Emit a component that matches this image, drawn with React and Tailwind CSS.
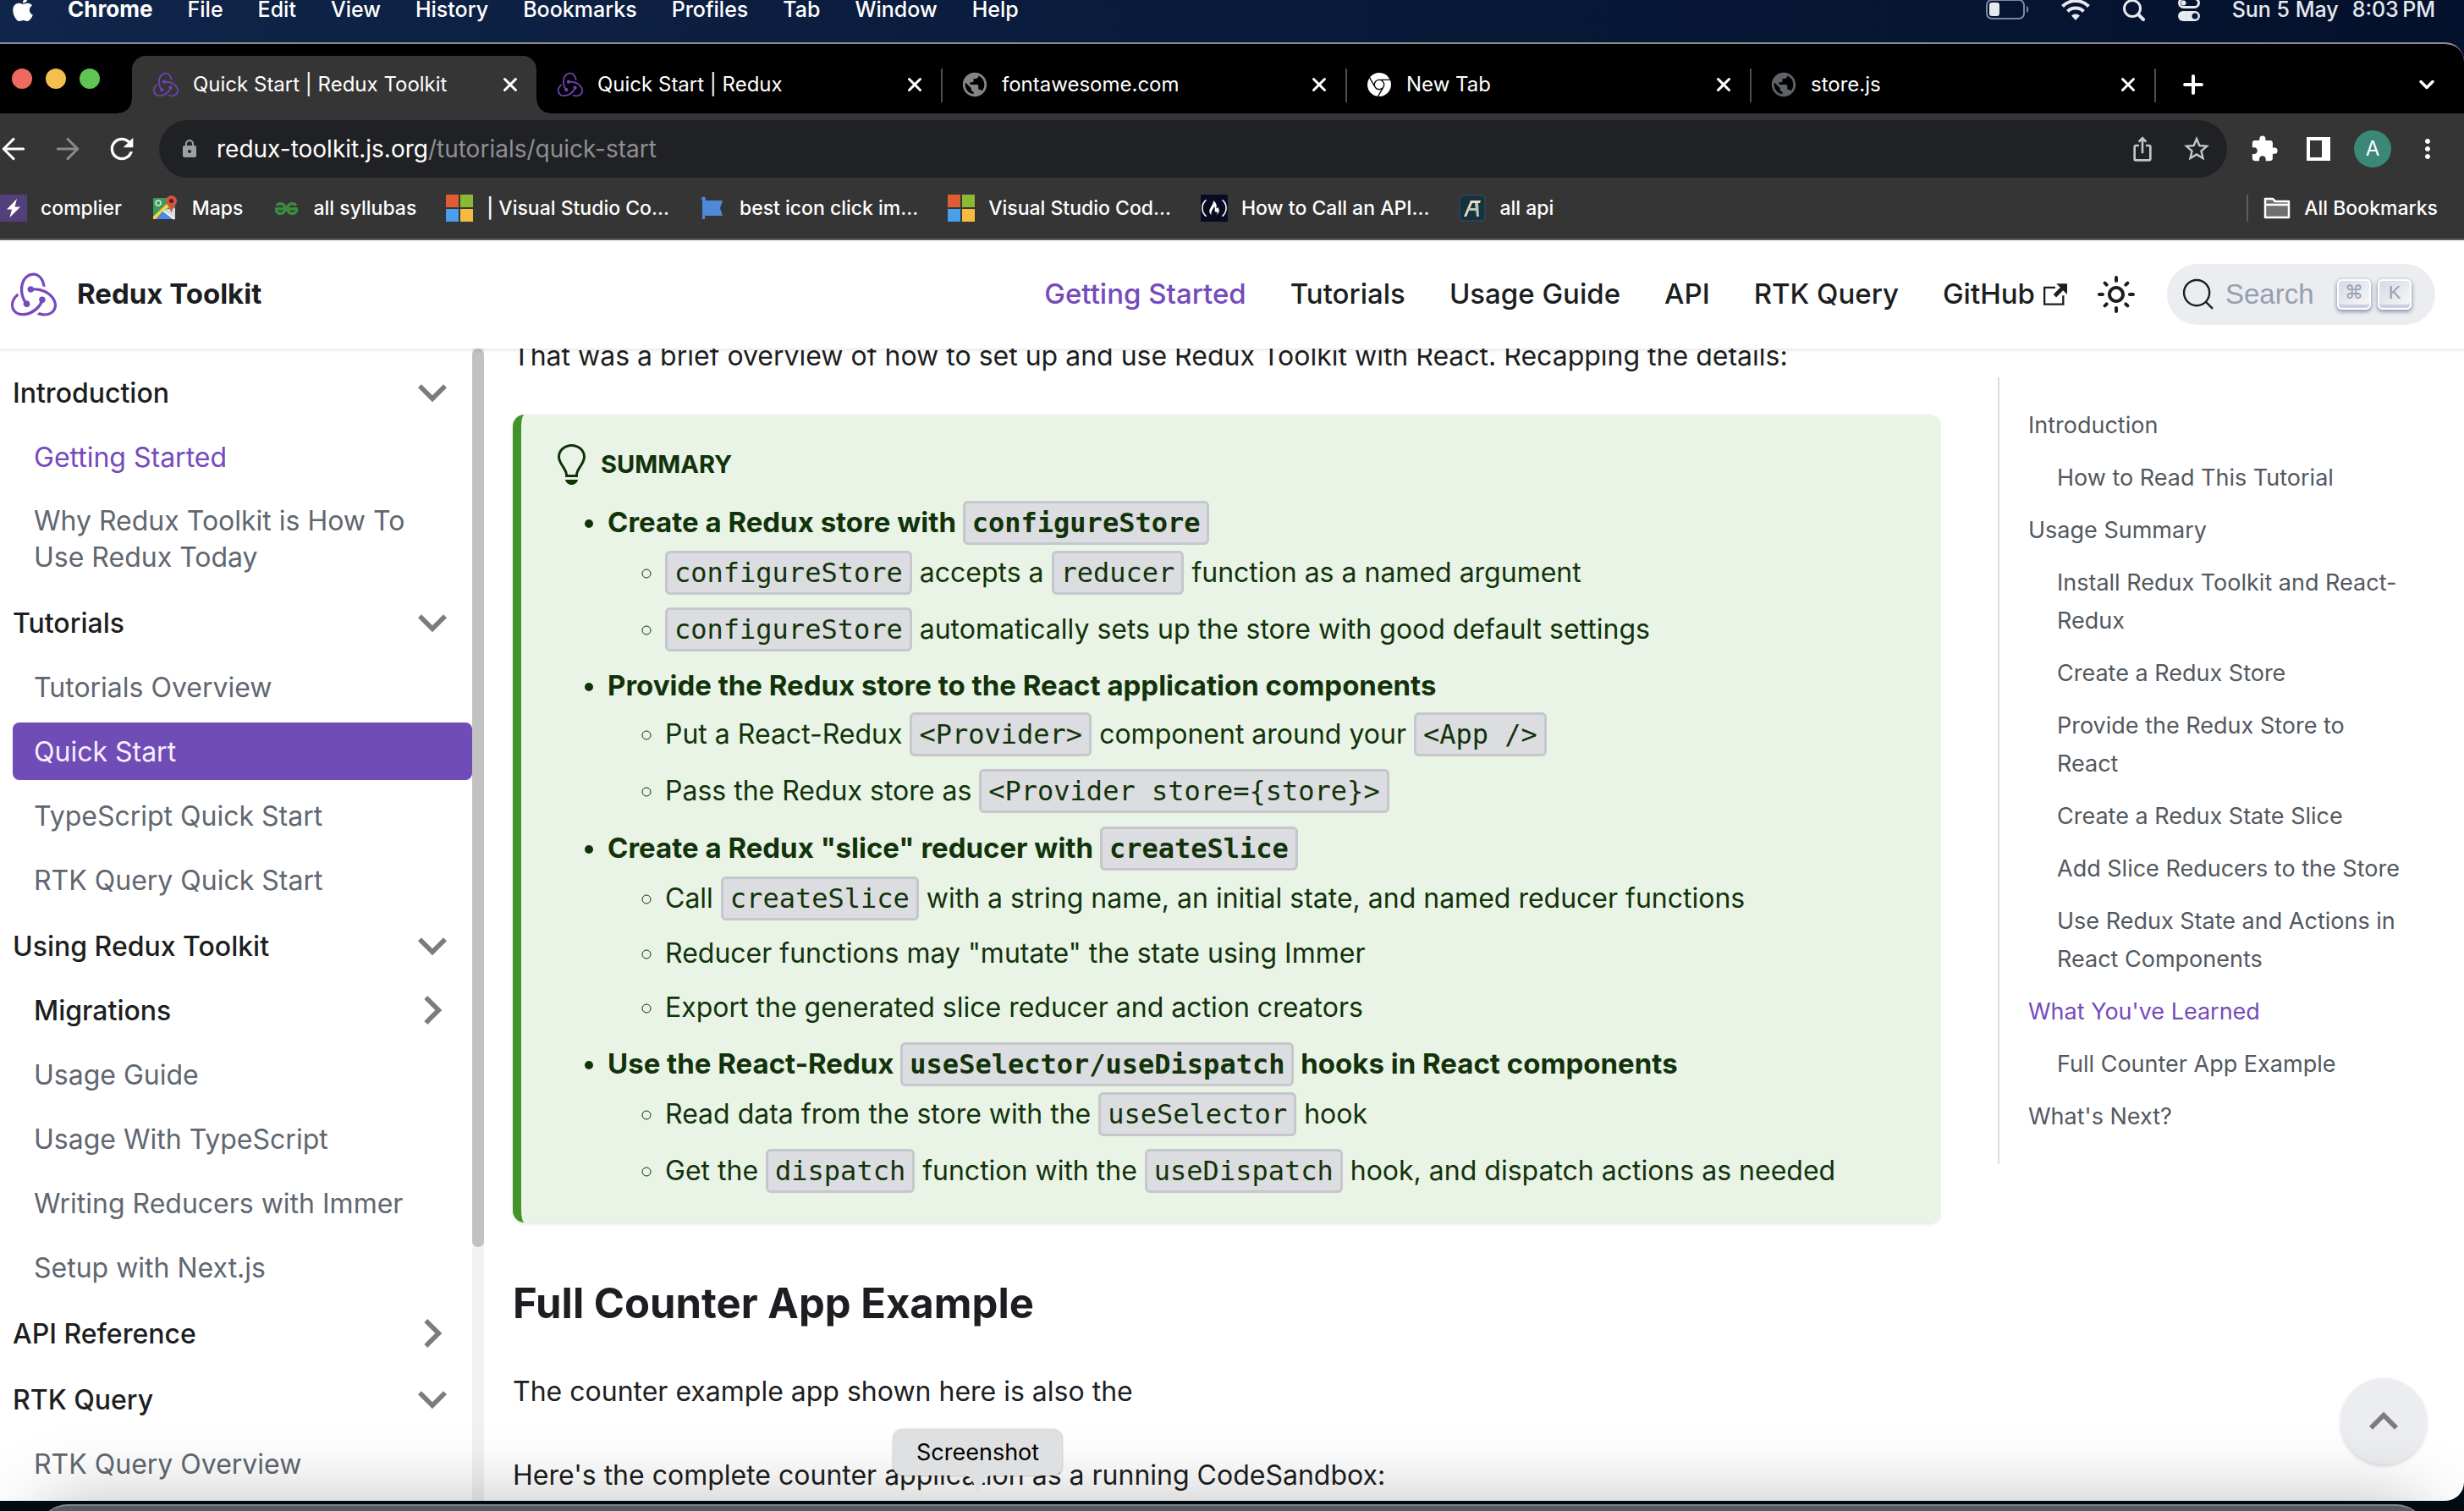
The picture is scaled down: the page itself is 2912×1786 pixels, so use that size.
import React from 'react';
import { SiRedux, SiGooglechrome, SiGeeksforgeeks } from 'react-icons/si';
import { FaApple, FaFreeCodeCamp } from 'react-icons/fa';
import { MdPublic, MdExtension, MdLock, MdStarBorder, MdRefresh, MdMoreVert, MdIosShare } from 'react-icons/md';
import { ArrowLeft, ArrowRight, ChevronDown, Plus, X } from 'lucide-react';

/* ---------- macOS menu bar ---------- */

const menus = ['File', 'Edit', 'View', 'History', 'Bookmarks', 'Profiles', 'Tab', 'Window', 'Help'];

function MenuBar() {
  return (
    <header className="h-[50px] shrink-0 text-[25px] leading-[22px] font-medium text-white">
      <div className="flex h-[22px] items-center justify-between pr-[34px] pl-[11px]">
        <nav aria-label="Menu bar" className="flex items-center gap-[41px]">
          <button aria-label="Apple menu" className="-mr-[4px]">
            <FaApple className="size-[32px]" />
          </button>
          <button className="text-[26px] font-bold">Chrome</button>
          {menus.map((m) => (
            <button key={m}>{m}</button>
          ))}
        </nav>
        <div className="flex items-center text-[#e6e9ef]">
          <svg viewBox="0 0 52 26" className="mr-[37px] h-[26px] w-[52px]" aria-label="Battery">
            <rect x="1" y="2" width="44" height="22" rx="6" fill="none" stroke="#8088a0" strokeWidth="2" />
            <rect x="4" y="5" width="12" height="16" rx="3" fill="currentColor" />
            <path d="M48 9c3 1 3 7 0 8z" fill="#8088a0" />
          </svg>
          <svg viewBox="0 0 34 26" className="mr-[38px] h-[26px] w-[34px]" fill="none" stroke="currentColor" strokeWidth="4" aria-label="Wi-Fi">
            <path d="M1.500 9.500a22 22 0 0 1 31 0" />
            <path d="M7.500 15.500a13.500 13.500 0 0 1 19 0" />
            <path d="M12 20.500a7.500 7.500 0 0 1 10 0L17 26z" fill="currentColor" stroke="none" />
          </svg>
          <svg viewBox="0 0 28 28" className="mr-[38px] size-[28px]" fill="none" stroke="currentColor" strokeWidth="3" strokeLinecap="round" aria-label="Spotlight">
            <circle cx="12" cy="13" r="9.500" />
            <path d="M19 20l6 6" strokeWidth="4" />
          </svg>
          <svg viewBox="0 0 26 30" className="mr-[38px] h-[30px] w-[26px]" aria-label="Control Centre">
            <rect x="1.500" y="2.500" width="23" height="10" rx="5" fill="none" stroke="currentColor" strokeWidth="3" />
            <circle cx="6.500" cy="7.500" r="3" fill="currentColor" />
            <rect x="0" y="17" width="26" height="12" rx="6" fill="currentColor" />
            <circle cx="20" cy="23" r="3.500" fill="#061634" />
          </svg>
          <time className="flex gap-[16px]">
            <span>Sun 5 May</span>
            <span>8:03{'\u2009'}PM</span>
          </time>
        </div>
      </div>
    </header>
  );
}

/* ---------- Browser chrome ---------- */

const redux = <SiRedux className="size-[30px] text-[#6b45ae]" />;

const tabs = [
  { title: 'Quick Start | Redux Toolkit', icon: redux, active: true },
  { title: 'Quick Start | Redux', icon: redux },
  { title: 'fontawesome.com', icon: <MdPublic className="size-[34px] text-[#868686]" /> },
  { title: 'New Tab', icon: <SiGooglechrome className="size-[28px] text-white" /> },
  { title: 'store.js', icon: <MdPublic className="size-[34px] text-[#5f6368]" /> },
];

function Tab({ title, icon, active, divider }) {
  return (
    <div
      role="tab"
      aria-selected={!!active}
      className={
        'relative flex h-[68px] w-[478px] min-w-0 items-center pr-[18px] pl-[23px] ' +
        (active
          ? 'rounded-t-[16px] bg-[#353535] before:absolute before:bottom-0 before:-left-4 before:size-4 before:bg-[radial-gradient(circle_at_0_0,transparent_15px,#353535_16px)] after:absolute after:-right-4 after:bottom-0 after:size-4 after:bg-[radial-gradient(circle_at_100%_0,transparent_15px,#353535_16px)]'
          : '')
      }
    >
      <span className="flex w-[34px] shrink-0 justify-center">{icon}</span>
      <span className="ml-[15px] grow truncate text-[24px]">{title}</span>
      <button aria-label="Close tab" className="shrink-0">
        <X className="size-[26px]" strokeWidth={2.8} />
      </button>
      {divider && <span className="absolute top-[15px] -right-[2px] h-[40px] w-[2px] bg-[#4d4d4d]" />}
    </div>
  );
}

function TabStrip() {
  return (
    <div className="flex h-[82px] items-end bg-black">
      <div className="mb-[29px] flex w-[156px] shrink-0 gap-[16px] pl-[14px]">
        <button aria-label="Close window" className="size-[24px] rounded-full bg-[#ed6a5e]" />
        <button aria-label="Minimise window" className="size-[24px] rounded-full bg-[#f5bf4f]" />
        <button aria-label="Zoom window" className="size-[24px] rounded-full bg-[#61c554]" />
      </div>
      <div role="tablist" className="flex">
        {tabs.map((t, i) => (
          <Tab key={t.title} {...t} divider={i > 0} />
        ))}
      </div>
      <div className="flex h-[68px] grow items-center justify-between pr-[30px] pl-[29px]">
        <button aria-label="New tab">
          <Plus className="size-[34px]" strokeWidth={2.8} />
        </button>
        <button aria-label="Search tabs">
          <ChevronDown className="size-[28px]" strokeWidth={3} />
        </button>
      </div>
    </div>
  );
}

function AddressRow() {
  return (
    <div className="flex h-[84px] items-center bg-[#353535]">
      <button aria-label="Back" className="-ml-[4px]">
        <ArrowLeft className="size-[40px]" strokeWidth={1.8} />
      </button>
      <button aria-label="Forward" className="ml-[24px] text-[#8a8a8a]">
        <ArrowRight className="size-[40px]" strokeWidth={1.8} />
      </button>
      <button aria-label="Reload" className="ml-[24px]">
        <MdRefresh className="size-[40px]" />
      </button>
      <div className="ml-[24px] flex h-[68px] grow items-center rounded-full bg-[#202124] pr-[18px] pl-[24px]">
        <MdLock className="size-[24px] text-[#9aa0a6]" />
        <div role="textbox" aria-label="Address" tabIndex={0} className="ml-[20px] grow text-[28px] text-[#8e9094]">
          <span className="text-white">redux-toolkit.js.org</span>/tutorials/quick-start
        </div>
        <button aria-label="Share" className="text-[#c4c5c6]">
          <MdIosShare className="size-[32px]" />
        </button>
        <button aria-label="Bookmark this page" className="ml-[30px] text-[#c4c5c6]">
          <MdStarBorder className="size-[36px]" />
        </button>
      </div>
      <button aria-label="Extensions" className="ml-[27px]">
        <MdExtension className="size-[34px]" />
      </button>
      <button aria-label="Side panel" className="ml-[33px] flex size-[28px] border-4 border-r-[10px] border-white" />
      <button aria-label="Profile" className="ml-[28px] size-[44px] rounded-full bg-[#3b8778] text-[24px] leading-[44px]">
        A
      </button>
      <button aria-label="More" className="mr-[25px] ml-[25px]">
        <MdMoreVert className="size-[36px]" />
      </button>
    </div>
  );
}

function Windows() {
  return (
    <span className="grid size-[32px] grid-cols-2 gap-[2px]">
      <span className="bg-[#e05c35]" />
      <span className="bg-[#8cb933]" />
      <span className="bg-[#4a9fea]" />
      <span className="bg-[#f5bb41]" />
    </span>
  );
}

const bookmarks = [
  {
    label: 'complier',
    icon: (
      <svg viewBox="0 0 32 32" className="size-[32px]">
        <rect width="32" height="32" fill="#53407b" />
        <path d="M20 5 8 17.500h6L11.500 27 24 14.500h-6.500z" fill="#fff" />
      </svg>
    ),
  },
  {
    label: 'Maps',
    icon: (
      <svg viewBox="0 0 32 32" className="size-[32px]">
        <rect x="2" y="4" width="26" height="25" fill="#3f9a5a" />
        <path d="M28 16v13L15 18z" fill="#d9dde2" />
        <path d="m15 19 11 10H5z" fill="#4f86ec" />
        <path d="M2 29v-3L20 9l3 5-9 5L5 29z" fill="#f8d347" />
        <path d="m14 19 13 10" stroke="#fff" strokeWidth="2" />
        <circle cx="8" cy="10" r="3" fill="none" stroke="#d5ecd9" strokeWidth="1.500" />
        <path d="M23.500 1a6.500 6.500 0 0 1 6.500 6.500c0 5-5 6-6 13.500h-1c-1-7.500-6-8.500-6-13.500A6.500 6.500 0 0 1 23.500 1z" fill="#d65241" />
        <circle cx="23.500" cy="7.500" r="2.500" fill="#5d1a15" />
      </svg>
    ),
  },
  { label: 'all syllubas', icon: <SiGeeksforgeeks className="size-[27px] stroke-current stroke-1 text-[#3d8b40]" /> },
  { label: '| Visual Studio Co...', icon: <Windows /> },
  {
    label: 'best icon click im...',
    icon: (
      <svg viewBox="0 0 32 32" className="size-[32px]" fill="#5089d8">
        <path d="M4 4h3v25H4z" />
        <circle cx="5.500" cy="5" r="2.500" />
        <path d="M7 7h21l-3 9 3 9H7z" />
      </svg>
    ),
  },
  { label: 'Visual Studio Cod...', icon: <Windows /> },
  {
    label: 'How to Call an API...',
    icon: (
      <span className="flex size-[32px] items-center justify-center bg-[#0a0a23]">
        <FaFreeCodeCamp className="size-[30px]" />
      </span>
    ),
  },
  {
    label: 'all api',
    icon: (
      <svg viewBox="0 0 32 32" className="size-[32px]">
        <rect x="1" y="1" width="30" height="30" rx="4" fill="#17323f" stroke="#2f5361" />
        <path d="M6 26 14 7h12l-1 3h-9L9 26z" fill="#e8dcc0" />
        <path d="M11 16h12l-1 3H11zM19 10h4l1 16h-3z" fill="#b9c4bd" />
      </svg>
    ),
  },
];

function BookmarkBar() {
  return (
    <div className="flex h-[64px] items-start justify-between bg-[#353535] pt-[12px] text-[23px] leading-[32px] font-medium">
      <nav aria-label="Bookmarks" className="flex gap-[35px]">
        {bookmarks.map((b) => (
          <a key={b.label} href="#bookmark" className="flex items-center gap-4 whitespace-nowrap">
            <span className="flex w-[32px] justify-center">{b.icon}</span>
            {b.label}
          </a>
        ))}
      </nav>
      <a href="#all" className="mr-[31px] flex items-center gap-4 border-l-2 border-[#5c5c5c] pl-[18px]">
        <svg viewBox="0 0 32 32" className="size-[32px]" fill="#6f6f6f" stroke="#fff" strokeWidth="2.500" strokeLinejoin="round">
          <path d="M2 27V5h9l3 3h16v19z" />
          <path d="M2 12h28" />
        </svg>
        All Bookmarks
      </a>
    </div>
  );
}

/* ---------- Documentation site ---------- */

function Chevron({ className }) {
  return (
    <svg viewBox="0 0 24 24" className={className} fill="#7c7c7c" aria-hidden="true">
      <path d="M7.410 15.410L12 10.830l4.590 4.580L18 14l-6-6-6 6z" />
    </svg>
  );
}

function Key({ children }) {
  return (
    <kbd className="flex h-[36px] w-[40px] items-start justify-center rounded-[6px] border-2 border-white bg-linear-to-br from-[#d5dbe4] to-[#f8f8f8] pt-[3px] font-['Liberation_Sans','DejaVu_Sans',sans-serif] text-[22px] leading-[22px] text-[#969faf] shadow-[inset_0_-4px_0_#cdcde6,0_2px_4px_1px_rgba(30,35,90,0.400)]">
      {children}
    </kbd>
  );
}

const navLinks = ['Getting Started', 'Tutorials', 'Usage Guide', 'API', 'RTK Query'];

function Navbar() {
  return (
    <header className="relative z-10 flex h-[128px] shrink-0 items-center bg-white pr-[34px] pl-[13px] text-[33px] font-medium text-[#1c1e21] shadow-[0_2px_4px_rgba(0,0,0,0.1)]">
      <a href="#home" className="flex grow items-center gap-[24px] font-bold">
        <SiRedux className="size-[54px] text-[#764abc]" />
        Redux Toolkit
      </a>
      <nav aria-label="Main" className="flex items-center gap-[52px]">
        {navLinks.map((l, i) => (
          <a key={l} href="#nav" className={i === 0 ? 'text-[#764abc]' : ''}>
            {l}
          </a>
        ))}
        <a href="#github" className="flex items-center gap-[10px]">
          GitHub
          <svg viewBox="0 0 24 24" className="size-[28px]" fill="currentColor">
            <path d="M21 13v10h-21v-19h12v2h-10v15h17v-8h2zm3-12h-10.988l4.035 4-6.977 7.070 2.828 2.828 6.977-7.070 4.125 4.172v-11z" />
          </svg>
        </a>
      </nav>
      <button aria-label="Switch between dark and light mode" className="ml-[34px]">
        <svg viewBox="0 0 24 24" className="size-[48px]" fill="currentColor">
          <path d="M12,9c1.650,0,3,1.350,3,3s-1.350,3-3,3s-3-1.350-3-3S10.350,9,12,9 M12,7c-2.760,0-5,2.240-5,5s2.240,5,5,5s5-2.240,5-5 S14.760,7,12,7L12,7z M2,13l2,0c0.550,0,1-0.450,1-1s-0.450-1-1-1l-2,0c-0.550,0-1,0.450-1,1S1.450,13,2,13z M20,13l2,0c0.550,0,1-0.450,1-1 s-0.450-1-1-1l-2,0c-0.550,0-1,0.450-1,1S19.450,13,20,13z M11,2v2c0,0.550,0.450,1,1,1s1-0.450,1-1V2c0-0.550-0.450-1-1-1S11,1.450,11,2z M11,20v2c0,0.550,0.450,1,1,1s1-0.450,1-1v-2c0-0.550-0.450-1-1-1C11.450,19,11,19.450,11,20z M5.990,4.580c-0.390-0.390-1.030-0.390-1.410,0 c-0.390,0.390-0.390,1.030,0,1.410l1.060,1.060c0.390,0.390,1.030,0.390,1.410,0s0.390-1.030,0-1.410L5.990,4.580z M18.360,16.950 c-0.390-0.390-1.030-0.390-1.410,0c-0.390,0.390-0.390,1.030,0,1.410l1.060,1.060c0.390,0.390,1.030,0.390,1.410,0c0.390-0.390,0.390-1.030,0-1.410 L18.360,16.950z M19.420,5.990c0.390-0.390,0.390-1.030,0-1.410c-0.390-0.390-1.030-0.390-1.410,0l-1.060,1.060c-0.390,0.390-0.390,1.030,0,1.410 s1.030,0.390,1.410,0L19.420,5.990z M7.050,18.360c0.390-0.390,0.390-1.030,0-1.410c-0.390-0.390-1.030-0.390-1.410,0l-1.060,1.060 c-0.390,0.390-0.390,1.030,0,1.410s1.030,0.390,1.410,0L7.050,18.360z" />
        </svg>
      </button>
      <button className="ml-[36px] flex h-[72px] w-[317px] items-center rounded-full bg-[#ebedf0] pl-[17px] font-['Liberation_Sans',sans-serif] font-normal text-[#969faf]">
        <svg viewBox="0 0 20 20" className="size-[40px] text-[#1c1e21]" fill="none" stroke="currentColor" strokeWidth="1.200" strokeLinecap="round">
          <path d="M14.386 14.386l4.088 4.088-4.088-4.088c-2.942 2.942-7.712 2.942-10.653 0-2.942-2.942-2.942-7.712 0-10.653 2.942-2.942 7.712-2.942 10.653 0 2.942 2.942 2.942 7.712 0 10.653z" />
        </svg>
        <span className="ml-[12px] grow text-left">Search</span>
        <span className="mr-[28px] flex gap-[8px]">
          <Key>⌘</Key>
          <Key>K</Key>
        </span>
      </button>
    </header>
  );
}

const sidebar = [
  {
    label: 'Introduction',
    open: true,
    items: [{ label: 'Getting Started', tone: 'accent' }, { label: 'Why Redux Toolkit is How To Use Redux Today' }],
  },
  {
    label: 'Tutorials',
    open: true,
    items: [
      { label: 'Tutorials Overview' },
      { label: 'Quick Start', tone: 'current' },
      { label: 'TypeScript Quick Start' },
      { label: 'RTK Query Quick Start' },
    ],
  },
  {
    label: 'Using Redux Toolkit',
    open: true,
    items: [
      { label: 'Migrations', tone: 'category' },
      { label: 'Usage Guide' },
      { label: 'Usage With TypeScript' },
      { label: 'Writing Reducers with Immer' },
      { label: 'Setup with Next.js' },
    ],
  },
  { label: 'API Reference', open: false, items: [] },
  { label: 'RTK Query', open: true, items: [{ label: 'RTK Query Overview' }] },
];

const tones = {
  accent: 'text-[#764abc]',
  current: 'rounded-[8px] bg-[#704cb6] text-[#f4effc]',
  category: 'font-medium text-[#1c1e21]',
  plain: 'text-[#606770]',
};

function Sidebar() {
  return (
    <aside className="flex w-[572px] shrink-0">
      <nav aria-label="Docs sidebar" className="w-[558px] overflow-hidden pt-[18px] pl-[15px] text-[32px] leading-[43px]">
        <ul>
          {sidebar.map((group) => (
            <li key={group.label} className="mt-[10px] first:mt-0">
              <button className="flex h-[68px] w-full items-center justify-between pr-[13px] font-medium text-[#1c1e21]">
                {group.label}
                <Chevron className={group.open ? 'size-[68px] rotate-180' : 'size-[68px] rotate-90'} />
              </button>
              <ul>
                {group.items.map((item) => (
                  <li key={item.label} className="mt-[8px]">
                    <a
                      href="#doc"
                      className={'flex min-h-[68px] items-center justify-between py-[12px] pl-[25px] ' + tones[item.tone || 'plain']}
                    >
                      <span className="max-w-[460px]">{item.label}</span>
                      {item.tone === 'category' && <Chevron className="-my-[12px] mr-[13px] size-[68px] rotate-90" />}
                    </a>
                  </li>
                ))}
              </ul>
            </li>
          ))}
        </ul>
      </nav>
      <div className="w-[14px] bg-[#f1f1f1]">
        <div className="h-[78%] rounded-full bg-[#c1c1c1]" />
      </div>
    </aside>
  );
}

function Code({ children }) {
  return (
    <code className="rounded-[6px] border-[3px] border-[#c6c7cd] bg-[#dcdde1] px-[8px] py-[4px] font-['DejaVu_Sans_Mono',monospace] text-[32px] leading-none">
      {children}
    </code>
  );
}

/* One line of the summary; lines that hold code are slightly taller. */
function Line({ bold, children }) {
  return (
    <p className={'leading-[56px] has-[code]:leading-[59px] ' + (bold ? 'text-[33px] font-bold' : 'text-[32px] font-normal')}>
      {children}
    </p>
  );
}

const summary = [
  {
    title: <>Create a Redux store with <Code>configureStore</Code></>,
    points: [
      <><Code>configureStore</Code> accepts a <Code>reducer</Code> function as a named argument</>,
      <><Code>configureStore</Code> automatically sets up the store with good default settings</>,
    ],
  },
  {
    title: 'Provide the Redux store to the React application components',
    points: [
      <>Put a React-Redux <Code>{'<Provider>'}</Code> component around your <Code>{'<App />'}</Code></>,
      <>Pass the Redux store as <Code>{'<Provider store={store}>'}</Code></>,
    ],
  },
  {
    title: <>Create a Redux "slice" reducer with <Code>createSlice</Code></>,
    points: [
      <>Call <Code>createSlice</Code> with a string name, an initial state, and named reducer functions</>,
      'Reducer functions may "mutate" the state using Immer',
      'Export the generated slice reducer and action creators',
    ],
  },
  {
    title: <>Use the React-Redux <Code>useSelector/useDispatch</Code> hooks in React components</>,
    points: [
      <>Read data from the store with the <Code>useSelector</Code> hook</>,
      <>Get the <Code>dispatch</Code> function with the <Code>useDispatch</Code> hook, and dispatch actions as needed</>,
    ],
  },
];

function Article() {
  return (
    <main className="min-w-0 grow overflow-hidden pl-[34px] text-[32px] leading-[56px] text-[#1c1e21]">
      <p className="-mt-[19px]">
        That was a brief overview of how to set up and use Redux Toolkit with React. Recapping the details:
      </p>
      <section className="mt-[41px] rounded-[14px] border-l-[10px] border-[#439329] bg-[#e9f4e7] px-[34px] pt-[35px] pb-[32px] text-[#12330a] shadow-[0_2px_4px_rgba(0,0,0,0.1)]">
        <h5 className="mb-[15px] flex h-[48px] items-center gap-[12px] text-[29px] font-bold uppercase">
          <svg viewBox="0 0 12 16" className="size-[48px]" fill="currentColor">
            <path
              fillRule="evenodd"
              d="M6.500 0C3.480 0 1 2.190 1 5c0 .920.550 2.250 1 3 1.340 2.250 1.780 2.780 2 4v1h5v-1c.220-1.220.660-1.750 2-4 .450-.750 1-2.080 1-3 0-2.810-2.480-5-5.500-5zm3.640 7.480c-.250.440-.470.800-.670 1.110-.860 1.410-1.250 2.060-1.450 3.230-.020.050-.020.110-.020.170H5c0-.060 0-.130-.020-.170-.200-1.170-.590-1.830-1.450-3.230-.200-.310-.420-.670-.670-1.110C2.440 6.780 2 5.650 2 5c0-2.200 2.020-4 4.500-4 1.220 0 2.360.420 3.220 1.190C10.550 2.940 11 3.940 11 5c0 .660-.440 1.780-.860 2.480zM4 14h5c-.230 1.140-1.300 2-2.500 2s-2.270-.860-2.500-2z"
            />
          </svg>
          Summary
        </h5>
        <ul className="list-disc pl-[68px]">
          {summary.map((s, i) => (
            <li key={i} className="mt-[9px] first:mt-0">
              <Line bold>{s.title}</Line>
              <ul className="list-[circle] pl-[68px]">
                {s.points.map((p, j) => (
                  <li key={j} className="mt-[8px] first:mt-0">
                    <Line>{p}</Line>
                  </li>
                ))}
              </ul>
            </li>
          ))}
        </ul>
      </section>
      <h2 className="mt-[64px] text-[49px] leading-[64px] font-bold">Full Counter App Example</h2>
      <p className="mt-[44px]">The counter example app shown here is also the</p>
      <p className="mt-[43px]">Here's the complete counter application as a running CodeSandbox:</p>
    </main>
  );
}

const toc = [
  { label: 'Introduction', children: ['How to Read This Tutorial'] },
  {
    label: 'Usage Summary',
    children: [
      'Install Redux Toolkit and React-Redux',
      'Create a Redux Store',
      'Provide the Redux Store to React',
      'Create a Redux State Slice',
      'Add Slice Reducers to the Store',
      'Use Redux State and Actions in React Components',
    ],
  },
  { label: "What You've Learned", active: true, children: ['Full Counter App Example'] },
  { label: "What's Next?", children: [] },
];

function TableOfContents() {
  return (
    <nav aria-label="On this page" className="mt-[34px] mr-[33px] ml-[67px] w-[518px] shrink-0 self-start border-l-2 border-[#dadde1] py-[34px] pr-[38px] pl-[34px] text-[27px] leading-[45px] text-[#525860]">
      <ul className="flex flex-col gap-[17px]">
        {toc.map((t) => (
          <li key={t.label}>
            <a href="#section" className={t.active ? 'block text-[#764abc]' : 'block'}>
              {t.label}
            </a>
            {t.children.length > 0 && (
              <ul className="mt-[17px] flex flex-col gap-[17px] pl-[34px]">
                {t.children.map((c) => (
                  <li key={c}>
                    <a href="#section" className="block">
                      {c}
                    </a>
                  </li>
                ))}
              </ul>
            )}
          </li>
        ))}
      </ul>
    </nav>
  );
}

export default function App() {
  return (
    <div className="relative flex h-screen flex-col overflow-hidden bg-[#020c14] bg-linear-to-r from-[#10254a] to-[#04112c] font-['Inter',sans-serif]">
      <MenuBar />
      <div className="relative z-10 flex min-h-0 grow flex-col overflow-hidden rounded-r-[22px] border-t-2 border-[#8a8d93] bg-white">
        <div className="shrink-0 border-b-2 border-[#5f5f5f] text-white">
          <TabStrip />
          <AddressRow />
          <BookmarkBar />
        </div>
        <Navbar />
        <div className="flex min-h-0 grow">
          <Sidebar />
          <Article />
          <TableOfContents />
        </div>
        <button aria-label="Back to top" className="absolute right-[44px] bottom-[43px] size-[102px] rounded-full bg-[#ebedf0] shadow-[0_2px_4px_rgba(0,0,0,0.15)]">
          <Chevron className="mx-auto size-[68px]" />
        </button>
      </div>
      <div className="-mt-[40px] h-[52px] shrink-0 bg-[#020c14]" />
      <div className="absolute inset-x-[44px] -bottom-[92px] z-20 h-[100px] rounded-[36px] border-t-2 border-[#7d838b] bg-[#565c66] shadow-[0_0_90px_rgba(0,0,0,0.28)]" />
      <div role="tooltip" className="absolute bottom-[42px] left-[1056px] z-30 flex h-[54px] items-center rounded-[10px] bg-[#dfe0e2] px-[27px] text-[27px] text-black shadow-[0_0_3px_rgba(0,0,0,0.4)]">
        Screenshot
        <svg viewBox="0 0 30 20" className="absolute top-full left-1/2 h-[20px] w-[30px] -translate-x-1/2" fill="#dfe0e2">
          <path d="M0 0h30c-6 0-10 10-15 20C10 10 6 0 0 0z" />
        </svg>
      </div>
    </div>
  );
}
